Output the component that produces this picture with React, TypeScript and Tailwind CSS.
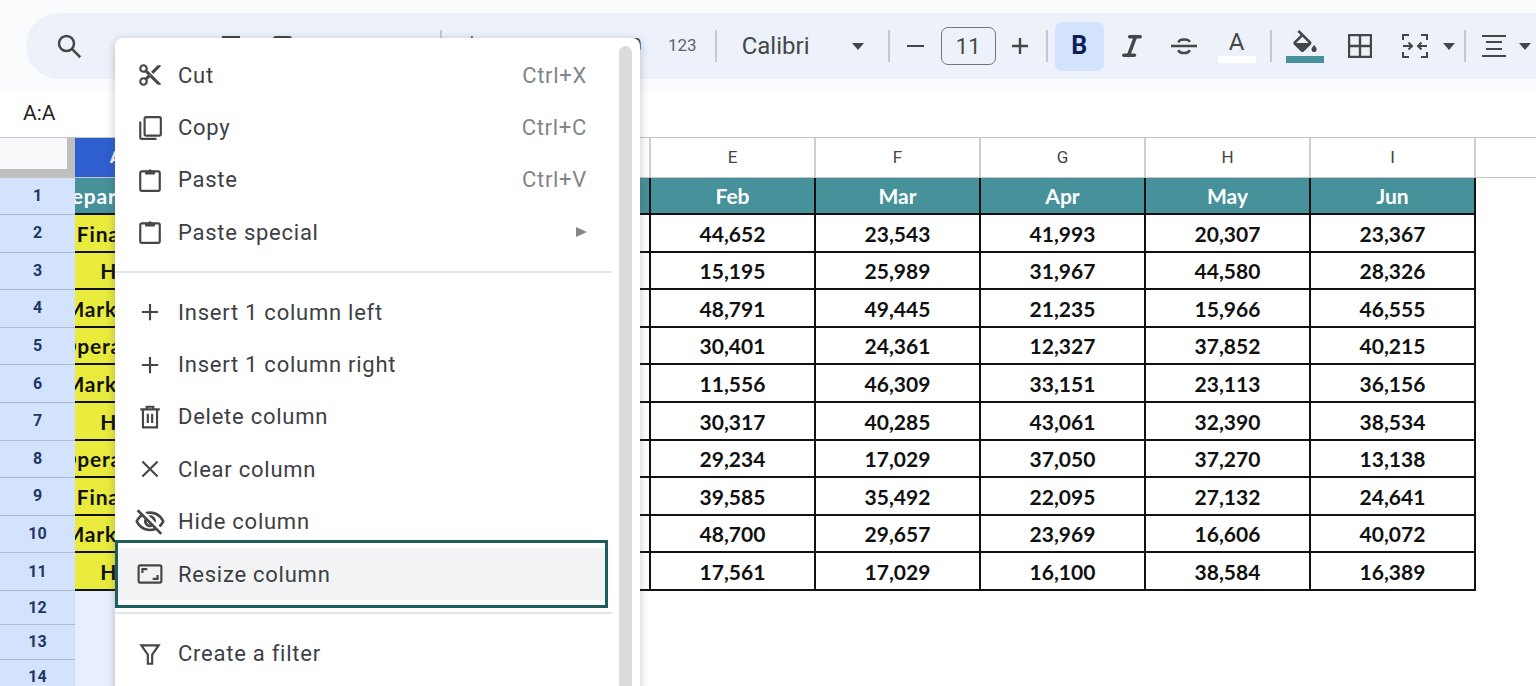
import { Italic } from "lucide-react"

const months = ["Feb", "Mar", "Apr", "May", "Jun"]

// rows 2-11: label in column A, then the five visible month columns
const rows = [
  { dept: "Finance", values: ["44,652", "23,543", "41,993", "20,307", "23,367"] },
  { dept: "HR", values: ["15,195", "25,989", "31,967", "44,580", "28,326"] },
  { dept: "Marketing", values: ["48,791", "49,445", "21,235", "15,966", "46,555"] },
  { dept: "Operations", values: ["30,401", "24,361", "12,327", "37,852", "40,215"] },
  { dept: "Marketing", values: ["11,556", "46,309", "33,151", "23,113", "36,156"] },
  { dept: "HR", values: ["30,317", "40,285", "43,061", "32,390", "38,534"] },
  { dept: "Operations", values: ["29,234", "17,029", "37,050", "37,270", "13,138"] },
  { dept: "Finance", values: ["39,585", "35,492", "22,095", "27,132", "24,641"] },
  { dept: "Marketing", values: ["48,700", "29,657", "23,969", "16,606", "40,072"] },
  { dept: "HR", values: ["17,561", "17,029", "16,100", "38,584", "16,389"] },
]

const stroke = { fill: "none", stroke: "currentColor", strokeWidth: 2 }

const icons: Record<string, React.ReactNode> = {
  cut: (
    <path
      fill="currentColor"
      d="M9.64 7.64c.23-.5.36-1.05.36-1.64 0-2.21-1.79-4-4-4S2 3.79 2 6s1.79 4 4 4c.59 0 1.14-.13 1.64-.36L10 12l-2.36 2.36C7.14 14.13 6.59 14 6 14c-2.21 0-4 1.79-4 4s1.79 4 4 4 4-1.79 4-4c0-.59-.13-1.14-.36-1.64L12 14l7 7h3v-1L9.64 7.64zM6 8c-1.1 0-2-.89-2-2s.9-2 2-2 2 .89 2 2-.9 2-2 2zm0 12c-1.1 0-2-.89-2-2s.9-2 2-2 2 .89 2 2-.9 2-2 2zm6-7.5c-.28 0-.5-.22-.5-.5s.22-.5.5-.5.5.22.5.5-.22.5-.5.5zM19 3l-6 6 2 2 7-7V3h-3z"
    />
  ),
  copy: (
    <g {...stroke}>
      <rect x="7" y="2" width="15" height="17" rx="1.5" />
      <path d="M3 6v14.5A1.5 1.5 0 0 0 4.5 22H18" />
    </g>
  ),
  paste: (
    <g {...stroke}>
      <path d="M8 4H4.5A1.5 1.5 0 0 0 3 5.5v15A1.5 1.5 0 0 0 4.5 22h15a1.5 1.5 0 0 0 1.5-1.5v-15A1.5 1.5 0 0 0 19.5 4H16" />
      <path fill="currentColor" d="M8 6.5V3.5h3a1 1 0 0 1 2 0h3v3z" strokeWidth="1" />
    </g>
  ),
  plus: <path {...stroke} d="M12 4.5v15M4.5 12h15" />,
  trash: (
    <g {...stroke}>
      <path d="M3 5h18M9 5V2.5h6V5M5.5 5v16.5h13V5M10 9v8.5M14 9v8.5" />
    </g>
  ),
  clear: <path {...stroke} d="M5 5l14 14M19 5L5 19" />,
  resize: (
    <g {...stroke}>
      <rect x="1.5" y="4" width="21" height="16" rx="1.5" />
      <path d="M5 11V7.5h4.5M19 13v3.5h-4.5" />
    </g>
  ),
  filter: <path {...stroke} d="M4 4h16l-6 8.5V21h-4v-8.5z" />,
}

function MenuIcon({ name }: { name: string }) {
  if (name === "hide") {
    return (
      <svg viewBox="0 0 24 24" className="-mx-[3px] w-[32px] h-[32px] text-[#444746] shrink-0">
        <path
          fill="currentColor"
          d="M12 6c3.79 0 7.17 2.13 8.82 5.5-.59 1.22-1.42 2.27-2.41 3.12l1.41 1.41c1.39-1.23 2.49-2.77 3.18-4.53C21.27 7.11 17 4 12 4c-1.27 0-2.49.2-3.64.57l1.65 1.65C10.66 6.09 11.32 6 12 6zm-1.07 1.14L13 9.21c.57.25 1.03.71 1.28 1.28l2.07 2.07c.08-.34.14-.7.14-1.07C16.5 9.01 14.48 7 12 7c-.37 0-.72.05-1.07.14zM2.01 3.87l2.68 2.68C3.06 7.83 1.77 9.53 1 11.5 2.73 15.89 7 19 12 19c1.52 0 2.98-.29 4.32-.82l3.42 3.42 1.41-1.41L3.42 2.45 2.01 3.87zm7.5 7.5l2.61 2.61c-.04.01-.08.02-.12.02-1.38 0-2.5-1.12-2.5-2.5 0-.05.01-.08.01-.13zm-3.4-3.4l1.75 1.75c-.23.55-.36 1.15-.36 1.78 0 2.48 2.02 4.5 4.5 4.5.63 0 1.23-.13 1.77-.36l.98.98c-.88.24-1.8.38-2.75.38-3.79 0-7.17-2.13-8.82-5.5.7-1.43 1.72-2.61 2.93-3.53z"
        />
      </svg>
    )
  }
  return (
    <svg viewBox="0 0 24 24" className="w-[26px] h-[26px] text-[#444746] shrink-0">
      {icons[name]}
    </svg>
  )
}

function MenuItem({ icon, label, shortcut, arrow }: { icon: string; label: string; shortcut?: string; arrow?: boolean }) {
  return (
    <div className="flex items-center h-[52.4px] pl-[22px] pr-[25px] gap-[15px] text-[22px] tracking-[0.75px] text-[#3c4043]">
      <MenuIcon name={icon} />
      <span className="flex-1">{label}</span>
      {shortcut && <span className="text-[#80868b] tracking-[0.7px]">{shortcut}</span>}
      {arrow && <span className="w-0 h-0 border-y-[5.5px] border-y-transparent border-l-[11px] border-l-[#80868b]" />}
    </div>
  )
}

function Sep({ className }: { className: string }) {
  return <div className={"w-[2px] h-[32px] bg-[#c7c9cc] shrink-0 " + className} />
}

function Caret({ className }: { className: string }) {
  return <div className={"w-0 h-0 border-x-[6.5px] border-x-transparent border-t-[7px] border-t-[#444746] shrink-0 " + className} />
}

function Toolbar() {
  return (
    <div className="bg-[#f9fbfd] pt-[13px] pb-[12px] pl-[26px]">
      <div className="h-[66px] bg-[#edf2fa] rounded-l-[33px] flex items-center text-[#444746]">
        <svg viewBox="0 0 24 24" className="ml-[28px] w-[30px] h-[30px] shrink-0">
          <circle cx="10" cy="10" r="6" fill="none" stroke="currentColor" strokeWidth="2" />
          <path d="M14.5 14.5L21 21" fill="none" stroke="currentColor" strokeWidth="2" />
        </svg>
        {/* icons that sit behind the open menu */}
        <div className="ml-[138px] w-[18px] h-[20px] border-t-2 border-[#444746] shrink-0" />
        <div className="ml-[33px] w-[19px] h-[20px] border-2 border-[#444746] rounded-[3px] shrink-0" />
        <Sep className="ml-[148px]" />
        <span className="ml-[24px] w-[10px] text-[20px]">$</span>
        <span className="ml-[92px] w-[20px] text-[20px]">.0</span>
        <span className="ml-[26px] w-[36px] text-[20px] whitespace-nowrap">.00</span>
        <span className="ml-[18px] text-[17px] text-[#5f6368]">123</span>
        <Sep className="ml-[18px]" />
        <span className="ml-[25px] text-[24px] w-[69px]">Calibri</span>
        <Caret className="ml-[41px]" />
        <Sep className="ml-[24px]" />
        <div className="ml-[17px] w-[17px] h-[2.5px] bg-[#444746] shrink-0" />
        <div className="ml-[17px] w-[55px] h-[38px] border-[1.5px] border-[#747775] rounded-[7px] flex items-center justify-center text-[22px] shrink-0">
          11
        </div>
        <svg viewBox="0 0 18 18" className="ml-[15px] w-[18px] h-[18px] shrink-0">
          <path d="M9 1v16M1 9h16" fill="none" stroke="currentColor" strokeWidth="2.4" />
        </svg>
        <Sep className="ml-[17px]" />
        <div className="ml-[7px] w-[49px] h-[49px] rounded-[7px] bg-[#d3e3fd] flex items-center justify-center text-[25px] font-bold text-[#0b1f57] shrink-0">
          B
        </div>
        <Italic className="ml-[14px] w-[28px] h-[28px] shrink-0" strokeWidth={3} />
        <svg viewBox="0 0 26 26" className="ml-[25px] w-[26px] h-[26px] shrink-0">
          <path
            d="M0 13h26M7.5 9.5C8 5.5 18 5.5 18.5 9M7.5 17c.5 4 10.5 4 11 0"
            fill="none"
            stroke="currentColor"
            strokeWidth="2.6"
          />
        </svg>
        <div className="ml-[21px] w-[38px] flex flex-col items-center shrink-0">
          <span className="text-[24px] leading-[24px]">A</span>
          <div className="mt-[2px] w-[38px] h-[7px] bg-white" />
        </div>
        <Sep className="ml-[14px]" />
        <div className="ml-[14px] w-[38px] flex flex-col items-center shrink-0">
          <svg viewBox="0 0 24 20" className="w-[32px] h-[26px]">
            <path
              fill="currentColor"
              d="M16.56 8.94L7.62 0 6.21 1.41l2.38 2.38-5.15 5.15c-.59.59-.59 1.54 0 2.12l5.5 5.5c.29.29.68.44 1.06.44s.77-.15 1.06-.44l5.5-5.5c.59-.58.59-1.53 0-2.12zM5.21 10L10 5.21 14.79 10H5.21zM19 11.5s-2 2.17-2 3.5c0 1.1.9 2 2 2s2-.9 2-2c0-1.33-2-3.5-2-3.5z"
            />
          </svg>
          <div className="w-[38px] h-[7px] bg-[#46919a]" />
        </div>
        <svg viewBox="0 0 24 24" className="ml-[24px] w-[24px] h-[24px] shrink-0">
          <path d="M1 1h22v22H1zM12 1v22M1 12h22" fill="none" stroke="currentColor" strokeWidth="2.4" />
        </svg>
        <svg viewBox="0 0 26 24" className="ml-[30px] w-[26px] h-[24px] shrink-0">
          <path
            d="M7 1H1v5M1 18v5h6M19 1h6v5M25 18v5h-6M1 12h9M6.5 8.5L10 12l-3.5 3.5M25 12h-9M19.5 8.5L16 12l3.5 3.5"
            fill="none"
            stroke="currentColor"
            strokeWidth="2"
          />
        </svg>
        <Caret className="ml-[15px]" />
        <Sep className="ml-[9px]" />
        <svg viewBox="0 0 24 24" className="ml-[16px] w-[24px] h-[24px] shrink-0">
          <path d="M0 2h24M4 8h16M4 15h16M0 22h24" fill="none" stroke="currentColor" strokeWidth="2" />
        </svg>
        <Caret className="ml-[13px]" />
      </div>
    </div>
  )
}

function DataRow({ index, dept, header, values }: { index: number; dept: string; header?: boolean; values: string[] }) {
  const cell = header ? "bg-[#46919a] text-white" : "bg-white text-[#111] pt-px"
  return (
    <div className={"flex " + (header ? "h-[37px]" : "h-[37.6px]")}>
      <div className="w-[75px] shrink-0 bg-[#d3e3fd] border-b border-[#aebacb] flex items-center justify-center font-bold text-[16px] text-[#1f3763]">
        {index}
      </div>
      <div className="flex border-b-2 border-[#111] font-['Lato'] font-bold text-[21px]">
        <div className={"w-[82px] flex items-center justify-center overflow-hidden whitespace-nowrap tracking-[0.8px] " + (header ? "bg-[#46919a] text-white" : "bg-[#e9ec3c] text-[#111] pt-px")}>
          {dept}
        </div>
        <div className={"w-[494px] border-r-2 border-[#111] " + cell} />
        {values.map((v, i) => (
          <div key={i} className={"w-[165px] flex items-center justify-center border-r-2 border-[#111] " + cell}>
            {v}
          </div>
        ))}
      </div>
    </div>
  )
}

function Sheet() {
  return (
    <div>
      <div className="flex h-[41px] border-y border-[#c4c4c4]">
        <div className="w-[75px] shrink-0 bg-[#bfbfbf] pr-[8px] pb-[8px]">
          <div className="w-full h-full bg-[#f8f9fa]" />
        </div>
        <div className="w-[81px] bg-[#2f5ecf] text-white font-bold flex items-center justify-center text-[17px]">A</div>
        {["B", "C", "D", "E", "F", "G", "H", "I"].map(c => (
          <div key={c} className="w-[165px] border-r-2 border-[#cfcfcf] flex items-center justify-center text-[17px] text-[#444]">
            {c}
          </div>
        ))}
      </div>
      <DataRow index={1} dept="Department" header values={months} />
      {rows.map((r, i) => (
        <DataRow key={i} index={i + 2} dept={r.dept} values={r.values} />
      ))}
      {[12, 13, 14].map(n => (
        <div key={n} className="flex h-[34.5px]">
          <div className="w-[75px] bg-[#d3e3fd] border-b border-[#aebacb] flex items-center justify-center font-bold text-[16px] text-[#1f3763]">
            {n}
          </div>
          <div className="w-[82px] bg-[#e8effc]" />
        </div>
      ))}
    </div>
  )
}

function ContextMenu() {
  return (
    <div className="absolute left-[115px] top-[38px] w-[525px] h-[660px] bg-white rounded-t-lg shadow-[0_2px_10px_rgba(60,64,67,0.3)] pt-[11px]">
      <div className="absolute left-[504px] top-[8px] bottom-0 w-[13px] bg-[#dadce0] rounded-t-full" />
      <div className="w-[497px]">
        <MenuItem icon="cut" label="Cut" shortcut="Ctrl+X" />
        <MenuItem icon="copy" label="Copy" shortcut="Ctrl+C" />
        <MenuItem icon="paste" label="Paste" shortcut="Ctrl+V" />
        <MenuItem icon="paste" label="Paste special" arrow />
        <div className="mt-[12px] mb-[13.4px] h-[2px] bg-[#e3e4e6]" />
        <MenuItem icon="plus" label="Insert 1 column left" />
        <MenuItem icon="plus" label="Insert 1 column right" />
        <MenuItem icon="trash" label="Delete column" />
        <MenuItem icon="clear" label="Clear column" />
        <MenuItem icon="hide" label="Hide column" />
        <div className="relative">
          <div className="absolute left-0 top-0 bottom-0 w-[490px] bg-[#f1f3f4]" />
          <div className="absolute left-0 -top-[8px] -bottom-[8px] w-[493px] border-[3px] border-[#1f5c5f]" />
          <div className="relative">
            <MenuItem icon="resize" label="Resize column" />
          </div>
        </div>
        <div className="mt-[12px] mb-[13.4px] h-[2px] bg-[#e3e4e6]" />
        <MenuItem icon="filter" label="Create a filter" />
      </div>
    </div>
  )
}

export default function App() {
  return (
    <div className="relative w-[1536px] h-[686px] overflow-hidden bg-white font-['Roboto']">
      <Toolbar />
      <div className="h-[46px] flex items-center pl-[23px] text-[21px] text-[#222]">A:A</div>
      <Sheet />
      <ContextMenu />
    </div>
  )
}
